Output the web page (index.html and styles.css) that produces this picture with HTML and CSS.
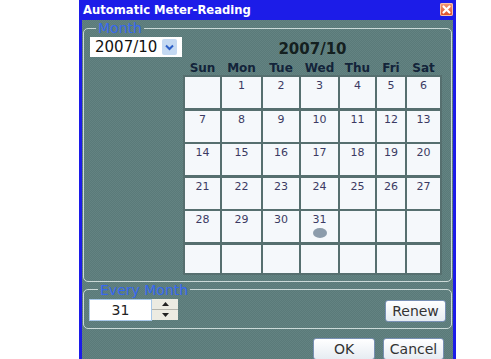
FILE: index.html
```html
<!DOCTYPE html>
<html>
<head>
<meta charset="utf-8">
<link rel="stylesheet" href="styles.css">
</head>
<body>
<div class="window">
  <div class="titlebar">
    <span class="title">Automatic Meter-Reading</span>
    <span class="close"><svg width="13" height="13" viewBox="0 0 13 13"><path d="M3.5 3.5 L9.5 9.5 M9.5 3.5 L3.5 9.5" stroke="#fff" stroke-width="2.2" stroke-linecap="round"/></svg></span>
  </div>
  <div class="content">
    <fieldset class="group month">
      <legend>Month</legend>
      <div class="month-body">
        <div class="select">
          <span class="select-text">2007/10</span>
          <span class="select-btn"><svg width="15" height="16" viewBox="0 0 15 16"><path d="M4 6.5 L7.5 10 L11 6.5" fill="none" stroke="#2c5fc8" stroke-width="2"/></svg></span>
        </div>
        <div class="calendar">
          <div class="cal-title">2007/10</div>
          <div class="cal-head">
            <span>Sun</span><span>Mon</span><span>Tue</span><span>Wed</span><span>Thu</span><span>Fri</span><span>Sat</span>
          </div>
          <div class="cal-grid">
            <div class="day"></div><div class="day">1</div><div class="day">2</div><div class="day">3</div><div class="day">4</div><div class="day">5</div><div class="day">6</div>
            <div class="day">7</div><div class="day">8</div><div class="day">9</div><div class="day">10</div><div class="day">11</div><div class="day">12</div><div class="day">13</div>
            <div class="day">14</div><div class="day">15</div><div class="day">16</div><div class="day">17</div><div class="day">18</div><div class="day">19</div><div class="day">20</div>
            <div class="day">21</div><div class="day">22</div><div class="day">23</div><div class="day">24</div><div class="day">25</div><div class="day">26</div><div class="day">27</div>
            <div class="day">28</div><div class="day">29</div><div class="day">30</div><div class="day">31<span class="mark"></span></div><div class="day"></div><div class="day"></div><div class="day"></div>
            <div class="day"></div><div class="day"></div><div class="day"></div><div class="day"></div><div class="day"></div><div class="day"></div><div class="day"></div>
          </div>
        </div>
      </div>
    </fieldset>
    <fieldset class="group every">
      <legend>Every Month</legend>
      <div class="every-body">
        <div class="spin">
          <span class="spin-input">31</span>
          <span class="spin-btns">
            <span class="spin-up"><svg width="7" height="4" viewBox="0 0 7 4"><path d="M0 4 L3.5 0 L7 4 Z" fill="#222"/></svg></span>
            <span class="spin-down"><svg width="7" height="4" viewBox="0 0 7 4"><path d="M0 0 L3.5 4 L7 0 Z" fill="#222"/></svg></span>
          </span>
        </div>
        <button class="btn renew">Renew</button>
      </div>
    </fieldset>
    <div class="actions">
      <button class="btn ok">OK</button>
      <button class="btn cancel">Cancel</button>
    </div>
  </div>
</div>
</body>
</html>
```
FILE: styles.css
```css
html, body {
  margin: 0;
  padding: 0;
  background: #ffffff;
}

body {
  font-family: "DejaVu Sans", Verdana, sans-serif;
  height: 359px;
  overflow: hidden;
}

.window {
  margin-left: 79px;
  width: 377px;
  background: #1c1ce8;
  padding: 0 3px 0 3px;
  box-sizing: border-box;
  height: 359px;
  overflow: hidden;
  display: flex;
  flex-direction: column;
}

.titlebar {
  height: 20px;
  flex: none;
  display: flex;
  align-items: flex-start;
  justify-content: space-between;
  margin: 0 -3px;
  padding: 2px 3px 0 4px;
  box-sizing: border-box;
}

.title {
  color: #ffffff;
  font-weight: bold;
  font-size: 11.6px;
  line-height: 16px;
}

.close {
  width: 13px;
  height: 13px;
  margin-top: 1px;
  border-radius: 2px;
  background: linear-gradient(#f39a78, #dc4a22);
  box-shadow: inset 0 0 0 1px #f7c0a8;
  display: block;
}

.close svg {
  display: block;
}

.content {
  flex: 1;
  min-height: 0;
  overflow: hidden;
  background-color: #5e7e7d;
  background-image: repeating-conic-gradient(#5a7a79 0 25%, #638382 0 50%);
  background-size: 2px 2px;
  padding: 1px 1px 0 1px;
  box-sizing: border-box;
}

.group {
  margin: 0;
  padding: 0;
  border: 1px solid #cbdad8;
  border-radius: 5px;
  min-inline-size: 0;
}

.group legend {
  font-size: 14px;
  line-height: 14px;
  color: #3668f0;
  padding: 0 2px;
}

.month legend {
  margin-left: 12px;
}

.every legend {
  margin-left: 14px;
}

.month-body {
  display: flex;
  align-items: flex-start;
  padding: 2px 0 6px 6px;
}

.select {
  width: 92px;
  height: 20px;
  background: #ffffff;
  display: flex;
  align-items: center;
  justify-content: space-between;
  padding: 0 5px 0 5px;
  box-sizing: border-box;
}

.select-text {
  font-size: 15px;
  color: #111;
  line-height: 20px;
}

.select-btn {
  width: 15px;
  height: 16px;
  background: #c4d9f2;
  border-radius: 2px;
  display: block;
}

.select-btn svg {
  display: block;
}

.calendar {
  margin-left: 1px;
  width: 259px;
}

.cal-title {
  margin-top: 3px;
  text-align: center;
  font-weight: bold;
  font-size: 15px;
  line-height: 18px;
  color: #142020;
}

.cal-head,
.cal-grid {
  display: grid;
  grid-template-columns: 35px 39px 36px 37px 35px 28px 33px;
  column-gap: 2px;
  padding: 0 2px;
}

.cal-head {
  margin-top: 3px;
  height: 14px;
}

.cal-head span {
  text-align: center;
  font-weight: bold;
  font-size: 12px;
  line-height: 14px;
  color: #13243a;
}

.cal-grid {
  grid-template-rows: repeat(5, 31px) 28px;
  row-gap: 2.6px;
  padding: 2px;
  background: #566f6f;
}

.day {
  background: #f5f8fb;
  text-align: center;
  font-size: 11px;
  line-height: 13px;
  padding-top: 2px;
  color: #3b3a63;
  box-sizing: border-box;
  display: flex;
  flex-direction: column;
  align-items: center;
}

.mark {
  display: block;
  width: 14px;
  height: 10px;
  border-radius: 50%;
  background: #8c9cab;
  margin-top: 2px;
}

.every {
  margin-top: 1px;
}

.every-body {
  display: flex;
  align-items: flex-start;
  justify-content: space-between;
  padding: 2px 5px 6px 5px;
}

.spin {
  display: flex;
  height: 22px;
}

.spin-input {
  width: 63px;
  height: 22px;
  box-sizing: border-box;
  background: #ffffff;
  border: 1px solid #a8c8e8;
  font-size: 14px;
  line-height: 20px;
  text-align: center;
  color: #222;
}

.spin-btns {
  width: 26px;
  height: 21px;
  background: #ecebe2;
  display: flex;
  flex-direction: column;
}

.spin-up,
.spin-down {
  flex: 1;
  display: flex;
  align-items: center;
  justify-content: center;
}

.spin-up {
  border-bottom: 1px solid #b4b4ac;
}

.spin-up svg,
.spin-down svg {
  display: block;
}

.btn {
  font-family: "DejaVu Sans", Verdana, sans-serif;
  font-size: 14px;
  line-height: 20px;
  height: 22px;
  padding: 0;
  color: #333;
  background: linear-gradient(#ffffff, #e6ecf2);
  border: 1px solid #7890b4;
  border-radius: 3px;
  box-sizing: border-box;
}

.renew {
  width: 61px;
  margin-top: 1px;
}

.actions {
  display: flex;
  justify-content: flex-end;
  gap: 8px;
  padding: 9px 8px 0 0;
}

.ok {
  width: 62px;
}

.cancel {
  width: 61px;
}
```
